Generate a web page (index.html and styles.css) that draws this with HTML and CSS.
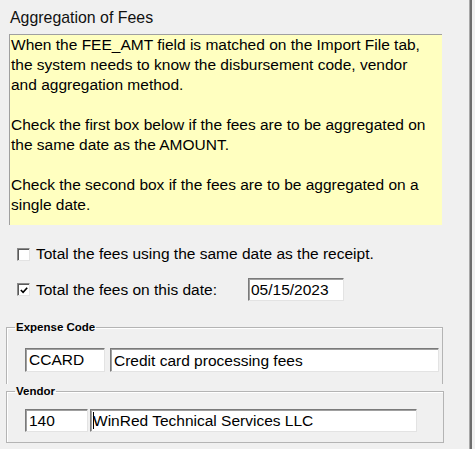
FILE: index.html
```html
<!DOCTYPE html>
<html>
<head>
<meta charset="utf-8">
<link rel="stylesheet" href="styles.css">
</head>
<body>
<div class="screen">
  <div class="panel">
    <div class="title">Aggregation of Fees</div>
    <div class="note">
      <p>When the FEE_AMT field is matched on the Import File tab,<br>the system needs to know the disbursement code, vendor<br>and aggregation method.</p>
      <p>Check the first box below if the fees are to be aggregated on<br>the same date as the AMOUNT.</p>
      <p>Check the second box if the fees are to be aggregated on a<br>single date.</p>
    </div>
    <div class="options">
      <div class="opt-row">
        <span class="check"></span>
        <span class="opt-label">Total the fees using the same date as the receipt.</span>
      </div>
      <div class="opt-row">
        <span class="check"><svg width="11" height="11" viewBox="0 0 11 11"><polyline points="2,5 4.5,7.5 9,2.5" fill="none" stroke="#000" stroke-width="1.8"/></svg></span>
        <span class="opt-label fixed">Total the fees on this date:</span>
        <span class="field date">05/15/2023</span>
      </div>
    </div>
    <fieldset class="group expense">
      <legend>Expense Code</legend>
      <div class="field-row">
        <span class="field code">CCARD</span>
        <span class="field desc">Credit card processing fees</span>
      </div>
    </fieldset>
    <fieldset class="group vendor">
      <legend>Vendor</legend>
      <div class="field-row vrow">
        <span class="field vcode">140</span>
        <span class="field vdesc"><span class="caret"></span>WinRed Technical Services LLC</span>
      </div>
    </fieldset>
  </div>
  <div class="edge"></div>
</div>
</body>
</html>
```
FILE: styles.css
```css
html, body {
  margin: 0;
  padding: 0;
  background: #f0f0f0;
}
body {
  font-family: "Liberation Sans", Arial, sans-serif;
  color: #000;
  font-size: 15.5px;
}
.screen {
  display: flex;
  width: 475px;
  height: 449px;
  overflow: hidden;
}
.panel {
  width: 469px;
  flex: none;
}
.edge {
  width: 2px;
  height: 449px;
  background: #6d6d6d;
  border-left: 1px solid #a8a8a8;
  flex: none;
}
.title {
  margin: 8px 0 0 10px;
  line-height: 20px;
  font-size: 15.9px;
  color: #101010;
}
.note {
  margin: 6px 0 0 9px;
  width: 431px;
  height: 190px;
  background: #ffffc0;
  border-top: 1px solid #a0a0a0;
  border-left: 1px solid #a0a0a0;
  padding-left: 1px;
  box-sizing: content-box;
  font-size: 15.5px;
  line-height: 20px;
}
.note p {
  margin: 0 0 20px 0;
}
.note p:last-child {
  margin-bottom: 0;
}
.options {
  margin-top: 19px;
  display: flex;
  flex-direction: column;
  gap: 14px;
}
.opt-row {
  display: flex;
  align-items: center;
  padding-left: 17px;
  min-height: 20px;
}
.check {
  width: 13px;
  height: 13px;
  box-sizing: border-box;
  background: #fff;
  border: 1px solid;
  border-color: #8a8a8a #e3e3e3 #e3e3e3 #8a8a8a;
  box-shadow: inset 1px 1px 0 #5a5a5a;
  display: inline-flex;
  align-items: center;
  justify-content: center;
  flex: none;
}
.check svg {
  display: block;
  margin: 1px 0 0 1px;
}
.opt-label {
  margin-left: 6px;
  line-height: 20px;
}
.opt-label.fixed {
  width: 212px;
}
.field {
  display: block;
  box-sizing: border-box;
  background: #fff;
  border: 1px solid;
  border-color: #7a7a7a #e3e3e3 #e3e3e3 #7a7a7a;
  box-shadow: inset 1px 1px 0 #a0a0a0;
  font-size: 15.5px;
  line-height: 20px;
  padding: 1px 3px;
  white-space: nowrap;
  overflow: hidden;
}
.date {
  width: 96px;
  height: 23px;
  padding-left: 2px;
}
.group {
  margin: 0 0 0 6px;
  padding: 0 0 0 8px;
  border: 1px solid #b4b4b4;
  box-shadow: inset 1px 1px 0 #fff;
}
.group legend {
  padding: 0 1px;
  font-weight: bold;
  font-size: 11.5px;
  line-height: 14px;
}
.expense {
  margin-top: 19px;
  width: 437px;
  box-sizing: border-box;
  border-bottom: none;
}
.vendor {
  width: 438px;
  box-sizing: border-box;
}
.field-row {
  display: flex;
  margin: 14px 0 12px 10px;
  gap: 5px;
}
.vrow {
  margin: 11px 0 10px 10px;
  gap: 2px;
}
.code {
  width: 80px;
  height: 24px;
}
.desc {
  width: 329px;
  height: 24px;
  padding-top: 2px;
}
.vcode {
  width: 63px;
  height: 23px;
}
.vdesc {
  width: 327px;
  height: 23px;
  padding-left: 2px;
}
.caret {
  display: inline-block;
  width: 1px;
  height: 17px;
  background: #000;
  vertical-align: -3px;
  margin-right: -1px;
}
```
